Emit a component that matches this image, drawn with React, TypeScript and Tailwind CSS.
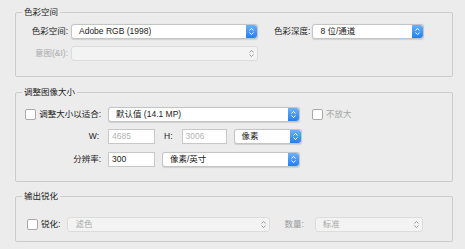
import React from "react";

const font = "font-['Liberation_Sans','Noto_Sans_CJK_SC',sans-serif]";

const Stepper = ({ active }: { active: boolean }) => (
    <div
        className={`h-full w-[11px] flex items-center justify-center rounded-r-[3px] ${
            active ? "bg-gradient-to-b from-[#69b1fa] to-[#1f7ff5]" : ""
        }`}
    >
        <svg width="5" height="9" viewBox="0 0 5 9" fill="none">
            <path
                d="M0.8 3.2 L2.5 1.4 L4.2 3.2 M0.8 5.8 L2.5 7.6 L4.2 5.8"
                stroke={active ? "#ffffff" : "#9a9a9a"}
                strokeWidth="1"
                strokeLinecap="round"
                strokeLinejoin="round"
            />
        </svg>
    </div>
);

const Select = ({
    value,
    width,
    disabled = false,
}: {
    value: string;
    width: string;
    disabled?: boolean;
}) => (
    <div
        className={`${width} h-[15px] flex items-center justify-between rounded-[3px] border ${
            disabled
                ? "bg-[#f3f3f3] border-[#dcdcdc] text-[#a8a8a8]"
                : "bg-white border-[#c4c4c4] text-[#222] shadow-[0_0.5px_1px_rgba(0,0,0,0.12)]"
        }`}
    >
        <span className="pl-[7px] truncate">{value}</span>
        <Stepper active={!disabled} />
    </div>
);

const Input = ({ value, width, disabled = false }: { value: string; width: string; disabled?: boolean }) => (
    <div
        className={`${width} h-[15px] flex items-center pl-[3px] bg-white border border-[#c8c8c8] ${
            disabled ? "text-[#b4b4b4]" : "text-[#222]"
        }`}
    >
        {value}
    </div>
);

const Checkbox = () => (
    <div className="w-[11px] h-[11px] shrink-0 bg-white border border-[#a9a9a9] rounded-[2px]" />
);

const Group = ({ title, className, children }: { title: string; className: string; children: React.ReactNode }) => (
    <fieldset className={`ml-[15px] w-[438px] border border-[#cbcbcb] rounded-[2px] ${className}`}>
        <legend className="ml-[6px] px-[2px] leading-[14px] text-[#222]">{title}</legend>
        {children}
    </fieldset>
);

export default function App() {
    return (
        <div className={`w-[465px] h-[249px] bg-[#ececec] text-[8.5px] overflow-hidden pt-[5px] ${font}`}>
            <Group title="色彩空间" className="pt-[5px] pb-[15px]">
                <div className="flex flex-col gap-[7px]">
                    <div className="flex items-center h-[15px]">
                        <div className="w-[52px] text-right text-[#222]">色彩空间:</div>
                        <div className="ml-[3px]">
                            <Select value="Adobe RGB (1998)" width="w-[187px]" />
                        </div>
                        <div className="ml-[16px] text-[#222]">色彩深度:</div>
                        <div className="ml-[2px]">
                            <Select value="8 位/通道" width="w-[112px]" />
                        </div>
                    </div>
                    <div className="flex items-center h-[15px]">
                        <div className="w-[52px] text-right text-[#ababab]">意图(&amp;I):</div>
                        <div className="ml-[3px]">
                            <Select value="" width="w-[187px]" disabled />
                        </div>
                    </div>
                </div>
            </Group>

            <Group title="调整图像大小" className="mt-[8px] pt-[8px] pb-[14px]">
                <div className="flex flex-col gap-[7px]">
                    <div className="flex items-center h-[15px]">
                        <div className="w-[85px] flex items-center justify-end gap-[3px] text-[#222]">
                            <Checkbox />
                            <span>调整大小以适合:</span>
                        </div>
                        <div className="ml-[7px]">
                            <Select value="默认值 (14.1 MP)" width="w-[192px]" />
                        </div>
                        <div className="ml-[12px]">
                            <Checkbox />
                        </div>
                        <div className="ml-[3px] text-[#a5a5a5]">不放大</div>
                    </div>
                    <div className="flex items-center h-[15px]">
                        <div className="w-[85px] pr-[2px] text-right text-[#222]">W:</div>
                        <div className="ml-[7px]">
                            <Input value="4685" width="w-[47px]" disabled />
                        </div>
                        <div className="ml-[9px] text-[#222]">H:</div>
                        <div className="ml-[9px]">
                            <Input value="3006" width="w-[45px]" disabled />
                        </div>
                        <div className="ml-[7px]">
                            <Select value="像素" width="w-[68px]" />
                        </div>
                    </div>
                    <div className="flex items-center h-[15px] mt-[1px]">
                        <div className="w-[85px] text-right text-[#222]">分辨率:</div>
                        <div className="ml-[7px]">
                            <Input value="300" width="w-[47px]" />
                        </div>
                        <div className="ml-[7px]">
                            <Select value="像素/英寸" width="w-[138px]" />
                        </div>
                    </div>
                </div>
            </Group>

            <Group title="输出锐化" className="mt-[7px] pt-[14px] pb-[9px]">
                <div className="flex items-center h-[15px]">
                    <div className="ml-[11px]">
                        <Checkbox />
                    </div>
                    <div className="ml-[3px] text-[#222]">锐化:</div>
                    <div className="ml-[7px]">
                        <Select value="滤色" width="w-[203px]" disabled />
                    </div>
                    <div className="ml-[14px] text-[#9a9a9a]">数量:</div>
                    <div className="ml-[11px]">
                        <Select value="标准" width="w-[108px]" disabled />
                    </div>
                </div>
            </Group>
        </div>
    );
}
